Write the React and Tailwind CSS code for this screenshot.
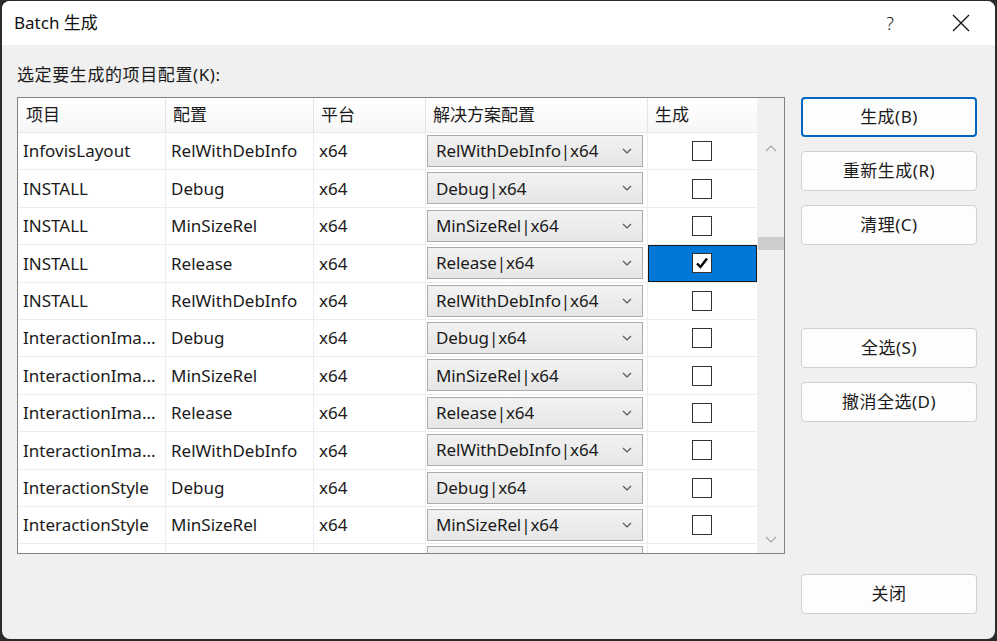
import React from "react";

const rows = [
  ["InfovisLayout", "RelWithDebInfo", false],
  ["INSTALL", "Debug", false],
  ["INSTALL", "MinSizeRel", false],
  ["INSTALL", "Release", true],
  ["INSTALL", "RelWithDebInfo", false],
  ["InteractionIma...", "Debug", false],
  ["InteractionIma...", "MinSizeRel", false],
  ["InteractionIma...", "Release", false],
  ["InteractionIma...", "RelWithDebInfo", false],
  ["InteractionStyle", "Debug", false],
  ["InteractionStyle", "MinSizeRel", false],
];

const font = {
  fontFamily: '"Noto Sans", "Noto Sans CJK SC", sans-serif',
};

function Chevron({ up, className }) {
  return (
    <svg width="12" height="8" viewBox="0 0 12 8" className={className}>
      <path
        d={up ? "M1 7 L6 2 L11 7" : "M1 1 L6 6 L11 1"}
        fill="none"
        stroke="currentColor"
        strokeWidth="1.2"
      />
    </svg>
  );
}

function Combo({ value }) {
  return (
    <div className="ml-[1px] mr-[4px] mt-[2px] h-[32px] border border-[#acacac] bg-gradient-to-b from-[#f2f2f2] to-[#e6e6e6] flex items-center pl-[8px] pr-[10px]">
      <span className="flex-1 text-[17px] text-[#1a1a1a] whitespace-nowrap tracking-[-0.1px]">
        {value + "|x64"}
      </span>
      <svg width="10" height="6" viewBox="0 0 10 6" className="text-[#555]">
        <path d="M1 1 L5 5 L9 1" fill="none" stroke="currentColor" strokeWidth="1.2" />
      </svg>
    </div>
  );
}

function CheckBox({ checked }) {
  return (
    <div className="w-[20px] h-[20px] border border-[#333] bg-white flex items-center justify-center">
      {checked && (
        <svg width="14" height="14" viewBox="0 0 14 14">
          <path d="M2 7.5 L5.5 11 L12 2.5" fill="none" stroke="#000" strokeWidth="2.4" />
        </svg>
      )}
    </div>
  );
}

function Btn({ children, primary, className = "" }) {
  return (
    <div
      className={`h-[40px] w-[176px] rounded-[4px] bg-[#fdfdfd] flex items-center justify-center text-[17px] tracking-[0.5px] text-[#1a1a1a] ${
        primary ? "border-2 border-[#0067c0]" : "border border-[#d0d0d0]"
      } ${className}`}
    >
      {children}
    </div>
  );
}

export default function App() {
  return (
    <div className="w-[997px] h-[641px] bg-[#2b2b2b] pl-[2px] pt-[1px]" style={font}>
      <div className="w-[993px] h-[638px] rounded-[8px] overflow-hidden bg-[#f0f0f0] flex flex-col">
        {/* title bar */}
        <div className="h-[44px] bg-white flex items-center pl-[12px] shrink-0">
          <span className="text-[17px] text-[#111] flex-1">Batch 生成</span>
          <span className="text-[18px] text-[#222] font-light mr-[58px]">?</span>
          <svg width="18" height="18" viewBox="0 0 18 18" className="mr-[25px]">
            <path d="M1 1 L17 17 M17 1 L1 17" stroke="#111" strokeWidth="1.3" />
          </svg>
        </div>

        <div className="flex-1 flex pl-[15px] pr-[16px]">
          {/* left side */}
          <div className="flex flex-col w-[768px]">
            <div className="h-[52px] flex items-center text-[17px] tracking-[0.6px] text-[#1a1a1a] pt-[8px]">
              选定要生成的项目配置(K):
            </div>
            <div className="h-[457px] border border-[#828282] bg-white flex overflow-hidden">
              <div className="flex-1 flex flex-col">
                {/* header */}
                <div className="h-[35px] flex text-[17px] text-[#1a1a1a] bg-gradient-to-b from-white to-[#f7f7f7] border-b border-[#e8e8e8] shrink-0">
                  <div className="w-[148px] border-r border-[#e5e5e5] flex items-center pl-[8px]">项目</div>
                  <div className="w-[148px] border-r border-[#e5e5e5] flex items-center pl-[7px]">配置</div>
                  <div className="w-[112px] border-r border-[#e5e5e5] flex items-center pl-[7px]">平台</div>
                  <div className="w-[222px] border-r border-[#e5e5e5] flex items-center pl-[7px]">解决方案配置</div>
                  <div className="flex-1 flex items-center pl-[7px]">生成</div>
                </div>
                {rows.map(([name, cfg, checked], i) => (
                  <div key={i} className="h-[37.4px] flex text-[17px] text-[#1a1a1a] border-b border-[#ededed] shrink-0">
                    <div className="w-[148px] border-r border-[#ededed] flex items-center pl-[5px] whitespace-nowrap overflow-hidden">{name}</div>
                    <div className="w-[148px] border-r border-[#ededed] flex items-center pl-[5px] whitespace-nowrap overflow-hidden">{cfg}</div>
                    <div className="w-[112px] border-r border-[#ededed] flex items-center pl-[5px]">x64</div>
                    <div className="w-[222px] border-r border-[#ededed]">
                      <Combo value={cfg} />
                    </div>
                    <div
                      className={`flex-1 flex items-center justify-center pr-[2px] ${
                        checked ? "bg-[#0078d7] border border-[#1a1a1a]" : ""
                      }`}
                    >
                      <CheckBox checked={checked} />
                    </div>
                  </div>
                ))}
                <div className="h-[20px] flex shrink-0">
                  <div className="w-[148px] border-r border-[#ededed]" />
                  <div className="w-[148px] border-r border-[#ededed]" />
                  <div className="w-[112px] border-r border-[#ededed]" />
                  <div className="w-[222px] border-r border-[#ededed]">
                    <div className="ml-[1px] mr-[4px] mt-[2px] h-[32px] border border-[#acacac] bg-[#f0f0f0]" />
                  </div>
                  <div className="flex-1 flex justify-center pr-[2px] pt-[9px]">
                    <div className="w-[20px] h-[20px] border border-[#333]" />
                  </div>
                </div>
              </div>
              {/* scrollbar */}
              <div className="w-[27px] bg-[#f0f0f0] flex flex-col items-center shrink-0">
                <div className="h-[35px]" />
                <Chevron up className="text-[#a6a6a6] mt-[11px] mb-[85px]" />
                <div className="w-[26px] h-[13px] bg-[#cdcdcd]" />
                <div className="flex-1" />
                <Chevron className="text-[#a6a6a6] mb-[9px]" />
              </div>
            </div>
          </div>

          {/* right side buttons */}
          <div className="ml-[16px] flex flex-col pt-[52px]">
            <Btn primary>生成(B)</Btn>
            <Btn className="mt-[14px]">重新生成(R)</Btn>
            <Btn className="mt-[14px]">清理(C)</Btn>
            <Btn className="mt-[83px]">全选(S)</Btn>
            <Btn className="mt-[14px]">撤消全选(D)</Btn>
            <Btn className="mt-[152px]">关闭</Btn>
          </div>
        </div>
      </div>
    </div>
  );
}
